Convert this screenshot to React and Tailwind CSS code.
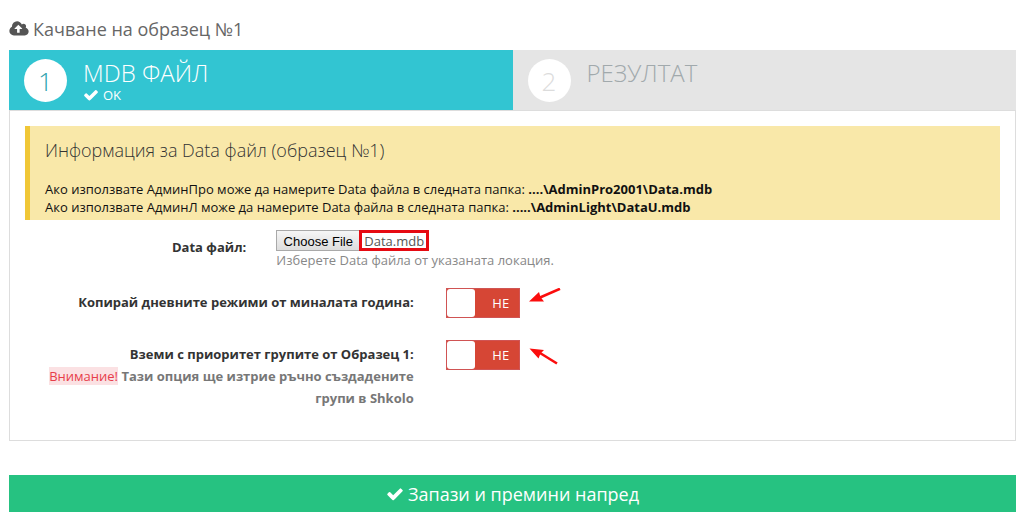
import { useEffect, useRef, useState } from 'react'

const CHECK_PATH =
  'M1671 566q0 40-28 68l-724 724-136 136q-28 28-68 28t-68-28l-136-136-362-362q-28-28-28-68t28-68l136-136q28-28 68-28t68 28l294 295 656-657q28-28 68-28t68 28l136 136q28 28 28 68z'

const CLOUD_PATH =
  'M1280 864q0-14-9-23l-352-352q-9-9-23-9t-23 9l-351 351q-10 12-10 24 0 14 9 23t23 9h224v352q0 13 9.5 22.5t22.5 9.5h192q13 0 22.5-9.5t9.5-22.5v-352h224q13 0 22.5-9.5t9.5-22.5zm640 288q0 159-112.5 271.5t-271.5 112.5h-1088q-185 0-316.5-131.5t-131.5-316.5q0-130 70-240t188-165q-2-30-2-43 0-212 150-362t362-150q156 0 285.5 87t188.5 231q71-62 166-62 106 0 181 75t75 181q0 76-41 138 130 31 213.5 135.5t83.5 238.5z'

function CheckIcon({ className }) {
  return (
    <svg viewBox="0 0 1792 1792" className={className} fill="currentColor" aria-hidden="true">
      <path d={CHECK_PATH} />
    </svg>
  )
}

function Step({ number, title, active, status }) {
  return (
    <li
      className={
        active
          ? 'flex h-[60px] flex-1 items-start bg-[#32c5d2] pl-[15px] pt-[9px] text-white'
          : 'flex h-[60px] flex-1 items-start bg-[#e5e5e5] pl-[15px] pt-[9px] text-[#a1a9ac]'
      }
    >
      <span
        className={
          active
            ? 'flex size-[43px] items-center justify-center rounded-full bg-white text-[26px] font-light text-[#2b9fac]'
            : 'flex size-[43px] items-center justify-center rounded-full bg-white text-[26px] font-light text-[#dcdcdc]'
        }
      >
        {number}
      </span>
      <div className="ml-4">
        <div className="text-[24px] font-light uppercase leading-[28px]">{title}</div>
        {status && (
          <div className="flex items-center gap-1 text-[13px] leading-[16px]">
            <CheckIcon className="size-4" />
            {status}
          </div>
        )}
      </div>
    </li>
  )
}

function Switch({ id }) {
  const [on, setOn] = useState(false)

  return (
    <label
      className={
        on
          ? 'flex h-[30px] w-[74px] cursor-pointer flex-row-reverse border border-[#26a65b] bg-[#26c281]'
          : 'flex h-[30px] w-[74px] cursor-pointer border border-[#d05454] bg-[#d64635]'
      }
    >
      <input
        id={id}
        type="checkbox"
        className="sr-only"
        checked={on}
        onChange={(e) => setOn(e.target.checked)}
      />
      <span className="w-7 rounded-[3px] bg-white" />
      <span className="flex-1 pl-2 text-center text-[13px] leading-[28px] text-white">
        {on ? 'ДА' : 'НЕ'}
      </span>
    </label>
  )
}

function FileField() {
  const inputRef = useRef(null)

  useEffect(() => {
    const transfer = new DataTransfer()
    transfer.items.add(new File([''], 'Data.mdb'))
    inputRef.current.files = transfer.files
  }, [])

  return (
    <div className="relative w-[153px]">
      <input
        ref={inputRef}
        id="data-file"
        type="file"
        className="block h-[21px] w-full text-[13px] leading-[21px] text-[#555] file:mr-1 file:h-[21px] file:w-[84px] file:border file:border-solid file:border-[#a9a9a9] file:bg-linear-to-b file:from-[#f6f6f6] file:to-[#dddddd] file:p-0 file:font-['Liberation_Sans',Arial,sans-serif] file:text-[13px] file:text-black"
      />
      <span className="pointer-events-none absolute inset-y-0 right-0 w-[70px] border-3 border-[#e60a12]" />
    </div>
  )
}

export default function App() {
  return (
    <main className="bg-white pb-2 pl-[9px] pr-2 pt-[17px] font-['Open_Sans','Noto_Sans',sans-serif] text-[13px] leading-[18px] text-[#333]">
      <h1 className="flex items-center gap-1 text-[18px] leading-6 text-[#666]">
        <svg viewBox="0 0 1920 1792" className="h-[18px] w-5" fill="#555" aria-hidden="true">
          <path d={CLOUD_PATH} />
        </svg>
        Качване на образец №1
      </h1>

      <form onSubmit={(e) => e.preventDefault()}>
        <ol className="mt-[9px] flex">
          <Step number="1" title="MDB файл" status="OK" active />
          <Step number="2" title="Резултат" />
        </ol>

        <div className="border border-[#dddddd] p-[15px] pb-[31px]">
          <div className="border-l-[5px] border-[#f0c737] bg-[#f9e8a9] px-[15px] pb-1 pt-3 text-[#111]">
            <h2 className="mb-[18px] text-[18px] font-light leading-6 text-[#333]">
              Информация за Data файл (образец №1)
            </h2>
            <p>
              Ако използвате АдминПро може да намерите Data файла в следната папка:{' '}
              <b>....\AdminPro2001\Data.mdb</b>
            </p>
            <p>
              Ако използвате АдминЛ може да намерите Data файла в следната папка:{' '}
              <b>.....\AdminLight\DataU.mdb</b>
            </p>
          </div>

          <div className="-mx-[15px] mt-[10px] grid grid-cols-12">
            <label
              htmlFor="data-file"
              className="col-span-3 px-[15px] pt-2 text-right font-bold"
            >
              Data файл:
            </label>
            <div className="col-span-9 px-[15px]">
              <FileField />
              <p className="text-[#888]">Изберете Data файла от указаната локация.</p>
            </div>
          </div>

          <div className="-mx-[15px] mt-[19px] grid grid-cols-12">
            <label
              htmlFor="copy-modes"
              className="col-span-5 px-[15px] pt-[3px] text-right font-bold leading-[22px]"
            >
              Копирай дневните режими от миналата година:
            </label>
            <div className="col-span-7 flex gap-2 px-[17px]">
              <Switch id="copy-modes" />
              <svg viewBox="0 0 34 30" className="h-[30px] w-[34px]" aria-hidden="true">
                <path d="M32 0.8 L12 9.5" stroke="#fb0d0d" strokeWidth="2.6" />
                <path d="M1 13.5 L11 4 L12.5 9 L16 13.5 Z" fill="#fb0d0d" />
              </svg>
            </div>
          </div>

          <div className="-mx-[15px] mt-[22px] grid grid-cols-12">
            <div className="col-span-5 px-[15px] pt-[3px] text-right font-bold leading-[22px]">
              <label htmlFor="priority-groups">Вземи с приоритет групите от Образец 1:</label>
              <p className="text-[#777]">
                <span className="bg-[#fbe1e3] font-normal text-[#e73d4a]">Внимание!</span> Тази
                опция ще изтрие ръчно създадените групи в Shkolo
              </p>
            </div>
            <div className="col-span-7 flex gap-2 px-[17px]">
              <Switch id="priority-groups" />
              <svg viewBox="0 0 34 30" className="h-[30px] w-[34px]" aria-hidden="true">
                <path d="M29 23.5 L12 13" stroke="#fb0d0d" strokeWidth="2.6" />
                <path d="M1.5 8.5 L16 10 L12.5 13.5 L10.5 18.5 Z" fill="#fb0d0d" />
              </svg>
            </div>
          </div>
        </div>

        <button
          type="submit"
          className="mt-[34px] flex h-[37px] w-full cursor-pointer items-center justify-center gap-1 bg-[#26c281] text-[18px] text-white"
        >
          <CheckIcon className="size-[18px]" />
          Запази и премини напред
        </button>
      </form>
    </main>
  )
}
